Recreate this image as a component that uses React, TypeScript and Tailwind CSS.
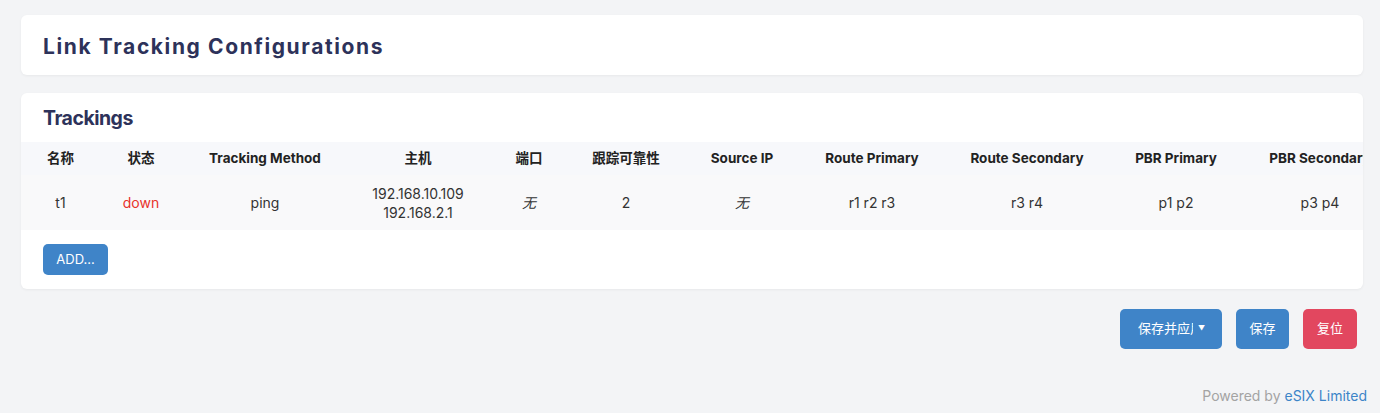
import React from "react";

const cols = [79, 82, 166, 140, 82, 112, 120, 140, 170, 128, 160];
const headers = ["名称", "状态", "Tracking Method", "主机", "端口", "跟踪可靠性", "Source IP", "Route Primary", "Route Secondary", "PBR Primary", "PBR Secondary"];

export default function App() {
  const font = { fontFamily: 'Inter, "Noto Sans CJK SC", "Noto Sans", sans-serif' };
  return (
    <div className="min-h-[413px] bg-[#f3f4f6] pl-[21px] pr-[17px] pt-[15px] pb-[8px] text-[#333]" style={font}>
      <div className="h-[60px] bg-white rounded-[6px] shadow-[0_1px_3px_rgba(0,0,0,0.05)] flex items-center px-[22px] pt-[3px]">
        <h1 className="text-[21px] font-bold tracking-[1.6px] text-[#2d325a]">Link Tracking Configurations</h1>
      </div>

      <div className="mt-[18px] bg-white rounded-[6px] shadow-[0_1px_3px_rgba(0,0,0,0.05)] overflow-hidden pb-[14px]">
        <h2 className="px-[22px] pt-[11px] h-[49px] text-[19.5px] font-bold text-[#2d325a] tracking-[-0.5px]">Trackings</h2>
        <table className="table-fixed border-collapse w-[1379px]">
          <colgroup>
            {cols.map((w, i) => (
              <col key={i} style={{ width: w }} />
            ))}
          </colgroup>
          <thead>
            <tr className="bg-[#f7f8fb] h-[33px] text-[13.5px]">
              {headers.map((h) => (
                <th key={h} className="font-bold text-center whitespace-nowrap text-[#222] p-0">{h}</th>
              ))}
            </tr>
          </thead>
          <tbody>
            <tr className="bg-[#f9f9fa] h-[55px] text-center text-[#333] text-[14px]">
              <td>t1</td>
              <td className="text-[#e8322b]">down</td>
              <td>ping</td>
              <td className="leading-[19px]">192.168.10.109<br />192.168.2.1</td>
              <td className="italic">无</td>
              <td>2</td>
              <td className="italic">无</td>
              <td>r1 r2 r3</td>
              <td>r3 r4</td>
              <td>p1 p2</td>
              <td>p3 p4</td>
            </tr>
          </tbody>
        </table>
        <div className="px-[22px] mt-[14px]">
          <button className="h-[31px] w-[65px] rounded-[5px] bg-[#3f84c8] text-white text-[13px]">ADD...</button>
        </div>
      </div>

      <div className="flex justify-end gap-[14px] mt-[20px] pr-[6px]">
        <button className="h-[40px] w-[102px] rounded-[5px] bg-[#3f84c8] text-white text-[13px] flex items-center pl-[18px]">
          <span className="w-[55px] overflow-hidden whitespace-nowrap text-left">保存并应用</span>
          <span className="ml-[5px] text-[7px]">▼</span>
        </button>
        <button className="h-[40px] w-[53px] rounded-[5px] bg-[#3f84c8] text-white text-[13px]">保存</button>
        <button className="h-[40px] w-[54px] rounded-[5px] bg-[#e2475f] text-white text-[13px]">复位</button>
      </div>

      <div className="flex justify-end mt-[36px] text-[14px] -mr-[4px]">
        <span className="text-[#a3a3a3]">Powered by&nbsp;</span>
        <span className="text-[#3d84c8]">eSIX Limited</span>
      </div>
    </div>
  );
}
